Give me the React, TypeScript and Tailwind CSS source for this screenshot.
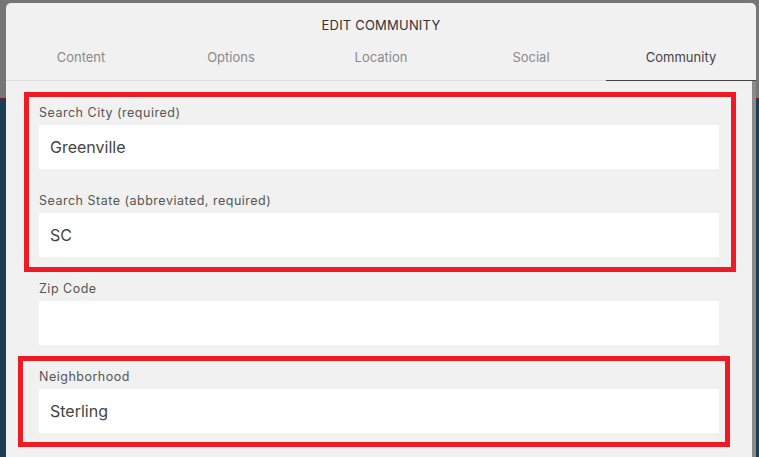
import React from 'react';

const tabs = ['Content', 'Options', 'Location', 'Social', 'Community'];

function Field({ label, value, last }: { label: string; value: string; last?: boolean }) {
  return (
    <div className={last ? '' : 'mb-[23px]'}>
      <div className="text-[12.5px] leading-[18px] tracking-[0.5px] text-[#555] mb-[3px]">{label}</div>
      <div className="h-[44px] bg-white flex items-center pl-[11px] text-[16px] text-[#444]">{value}</div>
    </div>
  );
}

export default function App() {
  return (
    <div className="relative w-[759px] h-[457px] overflow-hidden bg-[#777]" style={{ fontFamily: 'Inter, "Open Sans", sans-serif' }}>
      {/* page behind the dialog */}
      <div className="flex flex-col h-full">
        <div className="h-[98px] bg-[#767676]" />
        <div className="h-[2px] bg-[#7a1a1f]" />
        <div className="flex-1 bg-[#1e3d52]" />
      </div>

      {/* dialog */}
      <div className="absolute left-[6px] top-[3px] w-[750px] h-[460px] flex flex-col">
        <div className="bg-[#f1f1f1] rounded-t-[5px] border-b border-[#dcdcdc]">
          <div className="h-[43px] flex items-center justify-center pt-[2px] text-[13px] text-[#333] tracking-[0.2px]">
            EDIT COMMUNITY
          </div>
          <div className="flex h-[34px]">
            {tabs.map((t) => (
              <div
                key={t}
                className={
                  t === 'Community'
                    ? 'flex-1 flex items-center justify-center pb-[10px] text-[13px] text-[#444] border-b border-[#444] -mb-px'
                    : 'flex-1 flex items-center justify-center pb-[10px] text-[13px] text-[#8a8a8a]'
                }
              >
                {t}
              </div>
            ))}
          </div>
        </div>

        <div className="flex flex-1">
          <div className="flex-1 bg-[#f1f1f1] pt-[23px] px-[33px]">
            <div className="-mt-[12px] -ml-[15px] -mr-[17px] mb-[8px] border-[5px] border-[#ed1c24] pt-[7px] pl-[10px] pr-[12px] pb-[10px]">
              <Field label="Search City (required)" value="Greenville" />
              <Field label="Search State (abbreviated, required)" value="SC" last />
            </div>
            <Field label="Zip Code" value="" />
            <div className="-mt-[12px] -ml-[21px] -mr-[11px] border-[5px] border-[#ed1c24] pt-[7px] pl-[16px] pr-[6px] pb-[9px]">
              <Field label="Neighborhood" value="Sterling" last />
            </div>
          </div>
          <div className="w-[4px] bg-[#8a8a8a]" />
        </div>
      </div>
    </div>
  );
}
